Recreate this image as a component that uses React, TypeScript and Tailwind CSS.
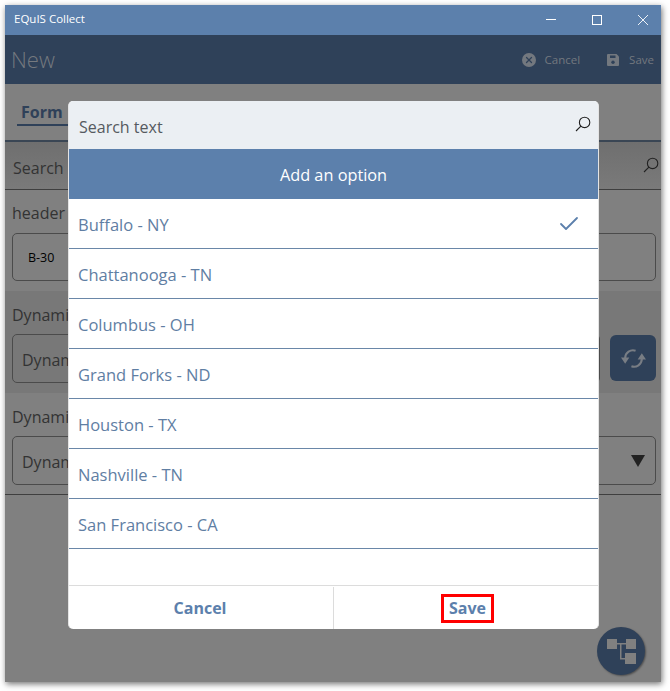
import { Check, X } from "lucide-react";

const cities = [
  "Buffalo - NY",
  "Chattanooga - TN",
  "Columbus - OH",
  "Grand Forks - ND",
  "Houston - TX",
  "Nashville - TN",
  "San Francisco - CA",
];

function SearchIcon({ className }: { className: string }) {
  return (
    <svg viewBox="0 0 16 16" fill="none" stroke="currentColor" strokeWidth="1.1" className={className}>
      <circle cx="9.6" cy="6.4" r="5.2" />
      <path d="M5.9 10.1 1 15" />
    </svg>
  );
}

function FieldLabel({ children }: { children: string }) {
  return <div className="text-[16px] leading-[22px] text-[#333]">{children}</div>;
}

export default function App() {
  return (
    <div className="h-[691px] w-[670px] bg-white pl-[5px] pt-[5px] font-['Open_Sans',sans-serif]">
      <div className="relative flex h-[677px] w-[656px] flex-col overflow-hidden bg-[#808080] shadow-[1px_2px_6px_rgba(0,0,0,0.55)]">
        {/* title bar */}
        <div className="flex h-[30px] shrink-0 items-center justify-between bg-[#5c80ac] pl-[9px] pr-[13px] text-white">
          <span className="mt-[-2px] text-[11.5px]">EQuIS Collect</span>
          <div className="flex items-center gap-[36px]">
            <svg viewBox="0 0 10 10" className="h-[10px] w-[10px]" stroke="currentColor" fill="none">
              <path d="M0 4.5h10" />
            </svg>
            <svg viewBox="0 0 10 10" className="h-[10px] w-[10px]" stroke="currentColor" fill="none">
              <rect x="0.5" y="0.5" width="9" height="9" />
            </svg>
            <svg viewBox="0 0 10 10" className="h-[10px] w-[10px]" stroke="currentColor" strokeWidth="0.9" fill="none">
              <path d="M0 0l10 10M10 0L0 10" />
            </svg>
          </div>
        </div>

        {/* command bar */}
        <div className="flex h-[49px] shrink-0 items-center justify-between bg-[#2f4159] pl-[6px] pr-[7px]">
          <span className="text-[22px] font-light text-[#75797f]">New</span>
          <div className="flex items-center text-[11.5px] text-[#73787f]">
            <span className="mr-[9px] flex h-[14px] w-[14px] items-center justify-center rounded-full bg-[#73787f]">
              <X size={10} strokeWidth={3} className="text-[#2f4159]" />
            </span>
            <span className="mr-[27px]">Cancel</span>
            <svg viewBox="0 0 12 12" className="mr-[10px] h-[12px] w-[12px]" fill="#73787f">
              <path d="M1 0h8.5L12 2.5V11a1 1 0 0 1-1 1H1a1 1 0 0 1-1-1V1a1 1 0 0 1 1-1z" />
              <rect x="3" y="1.5" width="5.5" height="2.5" fill="#2f4159" />
              <circle cx="6" cy="8.2" r="1.7" fill="#2f4159" />
            </svg>
            <span>Save</span>
          </div>
        </div>

        {/* tabs */}
        <div className="h-[58px] shrink-0 border-b-[2px] border-[#3a4654] pl-[12px] pt-[16px]">
          <div className="inline-block w-[56px] border-b-[2px] border-[#2f4159] px-[4px] pb-[1px] text-[16px] leading-[22px] font-bold text-[#2f4159]">
            Form
          </div>
        </div>

        {/* search strip */}
        <div className="flex h-[48px] shrink-0 items-center justify-between border-b border-[#3f3f3f] bg-gradient-to-b from-[#6f6f6f] to-[#7a7a7a] pl-[8px] pr-[2px] text-[16px] text-[#333]">
          <span className="mt-[5px]">Search</span>
          <SearchIcon className="mb-[2px] h-[16px] w-[16px] text-[#222]" />
        </div>

        <div className="h-[101px] shrink-0 pl-[7px] pr-[5px] pt-[12px]">
          <FieldLabel>header</FieldLabel>
          <div className="mt-[9px] flex h-[48px] items-center rounded-[5px] border border-[#4b4b4b] pl-[15px] pt-[2px] text-[12.5px] text-black">
            B-30
          </div>
        </div>

        <div className="flex h-[102px] shrink-0 flex-col bg-[#787878] pl-[7px] pr-[5px] pt-[13px]">
          <FieldLabel>Dynamic</FieldLabel>
          <div className="mt-[8px] flex items-start gap-[10px]">
            <div className="flex h-[49px] flex-1 items-center rounded-[5px] border border-[#4b4b4b] pl-[9px] pt-[3px] text-[16px] text-[#333]">
              Dynamic
            </div>
            <div className="mt-[1px] flex h-[46px] w-[46px] items-center justify-center rounded-[6px] bg-[#2f4159]">
              <svg viewBox="0 0 24 24" className="h-[25px] w-[25px]" fill="#787d84">
                <path d="M14 4.6A7.5 7.5 0 0 0 4 11.5M10 19.4A7.5 7.5 0 0 0 20 12.5" fill="none" stroke="#787d84" strokeWidth="2" />
                <path d="M0 11h8l-4 6zM16 13h8l-4-6z" />
              </svg>
            </div>
          </div>
        </div>

        <div className="h-[102px] shrink-0 border-b border-[#3f3f3f] pl-[7px] pr-[5px] pt-[13px]">
          <FieldLabel>Dynamic</FieldLabel>
          <div className="mt-[8px] flex h-[49px] items-center justify-between rounded-[5px] border border-[#4b4b4b] pl-[9px] pr-[10px] text-[16px] text-[#333]">
            <span className="mt-[2px]">Dynamic</span>
            <span className="h-0 w-0 border-x-[7px] border-t-[12px] border-x-transparent border-t-[#222]" />
          </div>
        </div>

        {/* floating button */}
        <div className="absolute left-[592px] top-[622px] h-[48px] w-[48px] rounded-full bg-[#2f4159] shadow-[1px_1px_2px_rgba(0,0,0,0.4)]">
          <svg viewBox="0 0 48 48" className="h-[48px] w-[48px]" fill="#808080">
            <rect x="10" y="12" width="10" height="10" />
            <rect x="29" y="12" width="10" height="10" />
            <rect x="28" y="26" width="11" height="11" />
            <path d="M20 16h9v1.5h-9zM23 17h1.5v14H28v1.5h-5z" />
          </svg>
        </div>

        {/* option picker */}
        <div className="absolute left-[63px] top-[96px] flex h-[528px] w-[531px] flex-col overflow-hidden rounded-[5px] border-x border-[#e4e4e4] bg-white">
          <div className="flex h-[48px] shrink-0 items-center justify-between bg-[#ebeff3] pl-[10px] pr-[7px] text-[16px] text-[#555a60]">
            <span className="mt-[3px]">Search text</span>
            <SearchIcon className="mb-[2px] h-[16px] w-[16px] text-[#222]" />
          </div>
          <div className="flex h-[50px] shrink-0 items-center justify-center bg-[#5c80ac] text-[16.3px] text-white">
            <span className="mt-[2px]">Add an option</span>
          </div>
          {cities.map((city, i) => (
            <div
              key={city}
              className="flex h-[50px] shrink-0 items-center justify-between border-b border-[#6a87a8] pl-[9px] pr-[17px] text-[16.5px] text-[#5f7ea3]"
            >
              <span className="mt-[4px]">{city}</span>
              {i === 0 && <Check size={24} strokeWidth={1.8} className="text-[#5c80ac]" />}
            </div>
          ))}
          <div className="flex-1" />
          <div className="flex h-[44px] shrink-0 border-t border-[#dcdcdc] pt-[1px] text-[16px] font-bold text-[#5c80ac]">
            <div className="flex w-[265px] items-center justify-center border-r border-[#dcdcdc] pr-[2px]">Cancel</div>
            <div className="flex flex-1 items-center justify-center">
              <span className="ml-[3px] border-[3px] border-[#ff0000] px-[5px] leading-[23px]">Save</span>
            </div>
          </div>
        </div>
      </div>
    </div>
  );
}
